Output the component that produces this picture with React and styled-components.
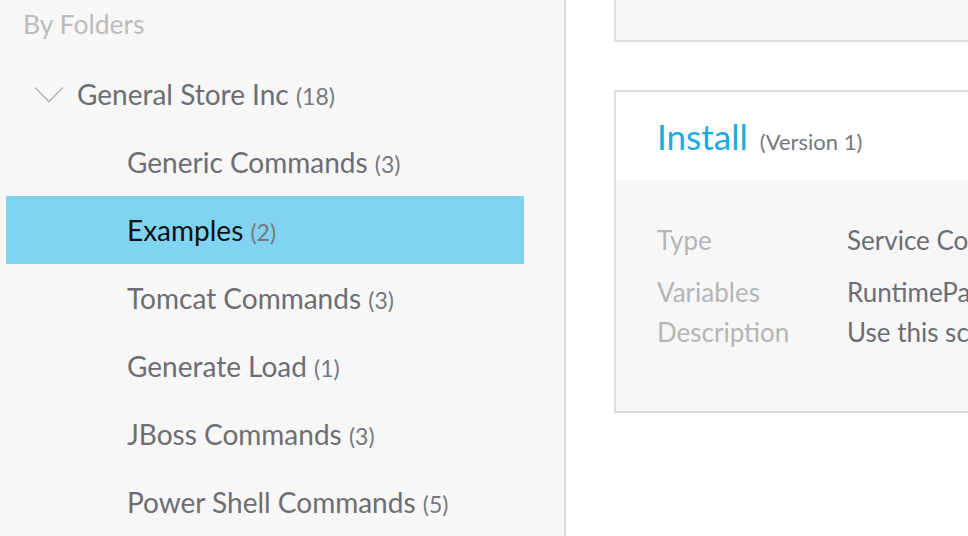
import React from "react";
import styled, { createGlobalStyle } from "styled-components";

const GlobalStyle = createGlobalStyle`
  html, body {
    margin: 0;
    padding: 0;
    background: #ffffff;
  }
  body {
    font-family: Lato, "Open Sans", sans-serif;
    -webkit-font-smoothing: antialiased;
  }
`;

const folders = [
  { name: "Generic Commands", count: 3 },
  { name: "Examples", count: 2, active: true },
  { name: "Tomcat Commands", count: 3 },
  { name: "Generate Load", count: 1 },
  { name: "JBoss Commands", count: 3 },
  { name: "Power Shell Commands", count: 5 },
];

const details = [
  { label: "Type", value: "Service Command" },
  { label: "Variables", value: "RuntimePath" },
  { label: "Description", value: "Use this script to install the service" },
];

const Chevron = () => (
  <svg width="30" height="17" viewBox="0 0 30 17">
    <polyline
      points="1,1.5 15,15.5 29,1.5"
      fill="none"
      stroke="#b8b8b8"
      strokeWidth="1.6"
    />
  </svg>
);

const App = () => (
  <>
    <GlobalStyle />
    <Page>
      <Sidebar>
        <SectionTitle>By Folders</SectionTitle>
        <RootRow>
          <Chevron />
          <RootName>
            General Store Inc <Count>(18)</Count>
          </RootName>
        </RootRow>
        {folders.map((f) => (
          <FolderRow key={f.name} active={f.active}>
            <span>
              {f.name} <Count>({f.count})</Count>
            </span>
          </FolderRow>
        ))}
      </Sidebar>

      <Main>
        <TopCard />
        <Card>
          <CardHeader>
            <CardTitle>Install</CardTitle>
            <Version>(Version 1)</Version>
          </CardHeader>
          <CardBody>
            {details.map((d, i) => (
              <DetailRow key={d.label} first={i === 0}>
                <Label>{d.label}</Label>
                <Value>{d.value}</Value>
              </DetailRow>
            ))}
          </CardBody>
        </Card>
      </Main>
    </Page>
  </>
);

/* Styled Components */

const Page = styled.div`
  display: flex;
  width: 968px;
  height: 536px;
  overflow: hidden;
`;

/**
 * Folder sidebar
 */
const Sidebar = styled.div`
  flex: 0 0 564px;
  background-color: #f7f7f7;
  border-right: 2px solid #dcdcdc;
`;

const SectionTitle = styled.div`
  height: 48px;
  line-height: 48px;
  padding-left: 23px;
  font-size: 26.5px;
  color: #bcbcbc;
  margin-bottom: 12px;
`;

const RootRow = styled.div`
  display: flex;
  align-items: center;
  height: 68px;
  padding-left: 34px;
  gap: 13px;
`;

const RootName = styled.span`
  font-size: 28px;
  color: #6d6d72;
`;

const Count = styled.span`
  font-size: 23px;
  color: #77777c;
`;

const FolderRow = styled.div`
  display: flex;
  align-items: center;
  height: 68px;
  margin-left: 6px;
  width: 518px;
  padding-left: 121px;
  box-sizing: border-box;
  font-size: 28px;
  color: ${(p) => (p.active ? "#111111" : "#6d6d72")};
  background-color: ${(p) => (p.active ? "#80d4f1" : "transparent")};
  white-space: nowrap;
`;

/**
 * Main content
 */
const Main = styled.div`
  flex: 1;
  padding-left: 48px;
  overflow: hidden;
  background: #ffffff;
`;

const TopCard = styled.div`
  width: 700px;
  height: 40px;
  background-color: #f7f7f7;
  border: 2px solid #dcdcdc;
  border-top: none;
  margin-bottom: 48px;
`;

const Card = styled.div`
  width: 700px;
  border: 2px solid #dcdcdc;
  background-color: #f7f7f7;
`;

const CardHeader = styled.div`
  display: flex;
  align-items: baseline;
  gap: 12px;
  height: 88px;
  line-height: 88px;
  padding-left: 41px;
  background-color: #ffffff;
`;

const CardTitle = styled.span`
  font-size: 35px;
  color: #1aabe0;
`;

const Version = styled.span`
  font-size: 22px;
  color: #77777c;
`;

const CardBody = styled.div`
  padding: 40px 0 59px 41px;
`;

const DetailRow = styled.div`
  display: flex;
  height: 40px;
  line-height: 40px;
  margin-top: ${(p) => (p.first ? "0" : "12px")};
  &:last-child {
    margin-top: 0;
  }
  font-size: 26px;
  white-space: nowrap;
`;

const Label = styled.span`
  flex: 0 0 190px;
  color: #b5b5b5;
`;

const Value = styled.span`
  color: #6d6d72;
`;

export default App;
